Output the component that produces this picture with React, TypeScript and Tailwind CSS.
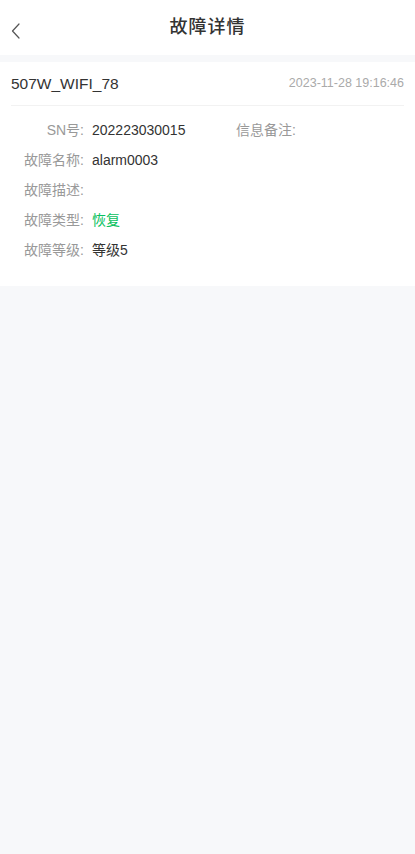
import React from 'react'

const font = { fontFamily: '"Liberation Sans", "Noto Sans CJK SC", sans-serif' }

function Field({ label, value, valueClass = 'text-[#333]' }: { label: string; value?: string; valueClass?: string }) {
  return (
    <div className="flex items-center h-[30px]">
      <span className="w-[63px] text-right text-[14px] text-[#999]">{label}:</span>
      <span className={`ml-[8px] text-[14px] ${valueClass}`}>{value}</span>
    </div>
  )
}

export default function App() {
  return (
    <div className="min-h-[854px] bg-[#f7f8fa]" style={font}>
      {/* 顶部导航 */}
      <div className="relative h-[55px] bg-white flex items-center justify-center">
        <button className="absolute left-[10px] top-[22px] w-[10px] h-[17px] flex items-center justify-center">
          <svg width="9" height="16" viewBox="0 0 9 16" fill="none">
            <path d="M8 1 L1.5 8 L8 15" stroke="#555" strokeWidth="1.2" strokeLinecap="round" strokeLinejoin="round" />
          </svg>
        </button>
        <div className="text-[18px] font-medium text-[#333] tracking-[1px]">故障详情</div>
      </div>

      {/* 卡片 */}
      <div className="mt-[7px] bg-white px-[11px] pb-[21px]">
        <div className="h-[44px] flex items-center justify-between border-b border-[#f2f2f2]">
          <span className="text-[15.5px] text-[#333]">507W_WIFI_78</span>
          <span className="text-[12.5px] text-[#aaa]">2023-11-28 19:16:46</span>
        </div>
        <div className="pt-[9px] pl-[10px]">
          <div className="flex items-center">
            <div className="w-[215px]">
              <Field label="SN号" value="202223030015" />
            </div>
            <span className="text-[14px] text-[#999]">信息备注:</span>
          </div>
          <Field label="故障名称" value="alarm0003" />
          <Field label="故障描述" />
          <Field label="故障类型" value="恢复" valueClass="text-[#07c160]" />
          <Field label="故障等级" value="等级5" />
        </div>
      </div>
    </div>
  )
}
